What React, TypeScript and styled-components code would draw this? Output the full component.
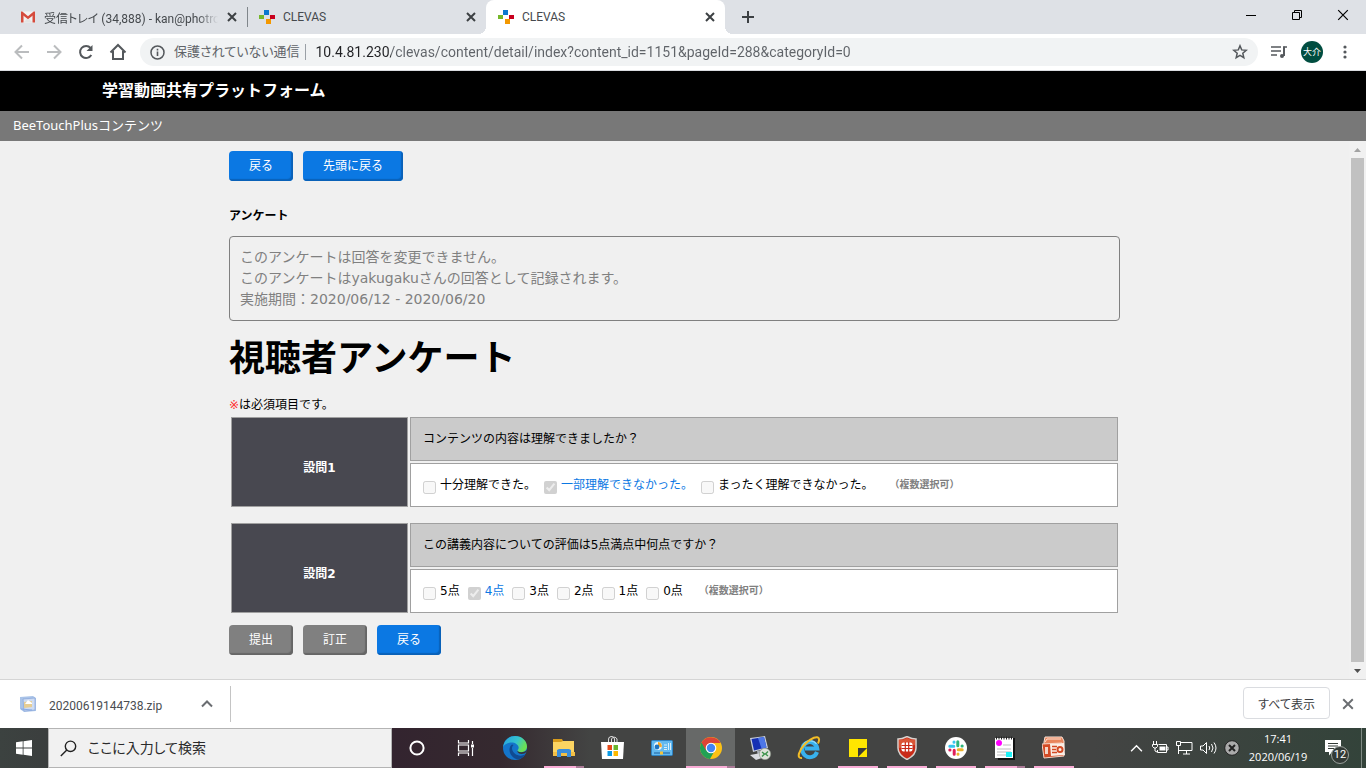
import React from "react";
import styled, { createGlobalStyle } from "styled-components";

const UI_FONT = 'Roboto, "Noto Sans CJK JP", sans-serif';
const PAGE_FONT = '"DejaVu Sans", "Noto Sans CJK JP", sans-serif';

const GlobalStyle = createGlobalStyle`
  * { box-sizing: border-box; }
  body { margin: 0; font-family: ${UI_FONT}; }
  button, input { font: inherit; }
  svg { display: block; flex: none; }
`;

/* ---------- window ---------- */

const Window = styled.div`
  display: flex;
  flex-direction: column;
  min-height: 100vh;
  background: #f0f0f0;
`;

const PlainButton = styled.button`
  display: flex;
  align-items: center;
  justify-content: center;
  flex: none;
  padding: 0;
  border: 0;
  background: transparent;
  color: inherit;
`;

/* ---------- tab strip ---------- */

const TabStrip = styled.div`
  display: flex;
  align-items: stretch;
  height: 34px;
  padding-left: 8px;
  background: #dee1e6;
`;

const Tab = styled.div<{ $active?: boolean; $divider?: boolean }>`
  position: relative;
  display: flex;
  align-items: center;
  gap: 8px;
  width: 239px;
  padding: 0 9px 0 12px;
  border-radius: 8px 8px 0 0;
  background: ${(p) => (p.$active ? "#ffffff" : "transparent")};
  color: #45494d;
  font-size: 12px;

  &::before,
  &::after {
    content: "";
    display: ${(p) => (p.$active ? "block" : "none")};
    position: absolute;
    bottom: 0;
    width: 8px;
    height: 8px;
  }
  &::before {
    right: 100%;
    background: radial-gradient(circle at 0 0, transparent 8px, #fff 8px);
  }
  &::after {
    left: 100%;
    background: radial-gradient(circle at 100% 0, transparent 8px, #fff 8px);
  }
  ${(p) =>
    p.$divider &&
    `&::after {
      display: block;
      width: 1px;
      height: 20px;
      bottom: 7px;
      background: #80868b;
    }`}
`;

const TabTitle = styled.span<{ $fade?: boolean }>`
  flex: 1;
  min-width: 0;
  white-space: nowrap;
  font-feature-settings: "palt";
  ${(p) => p.$fade && "mask-image: linear-gradient(90deg, #000 88%, transparent);"}
`;

const TabClose = styled(PlainButton)`
  width: 12px;
  height: 16px;
`;

const NewTab = styled(PlainButton)`
  width: 46px;
`;

const WindowControls = styled.div`
  display: flex;
  margin-left: auto;
`;

const WindowControl = styled(PlainButton)`
  width: 46px;
  height: 29px;
`;

/* ---------- toolbar ---------- */

const Toolbar = styled.div`
  display: flex;
  align-items: center;
  height: 37px;
  padding: 0 5px 0 6px;
  background: #fff;
  border-bottom: 1px solid #dadce0;
`;

const ToolButton = styled(PlainButton)`
  width: 32px;
  height: 32px;
`;

const Omnibox = styled.div`
  display: flex;
  align-items: center;
  flex: 1;
  min-width: 0;
  height: 28px;
  margin: 0 5px 0 6px;
  padding: 0 10px;
  border-radius: 14px;
  background: #f1f3f4;
  color: #5f6368;
  font-size: 14px;
`;

const Security = styled.span`
  flex: none;
  margin-left: 9px;
  padding-right: 6px;
  border-right: 1px solid #9aa0a6;
  font-size: 13px;
  line-height: 16px;
  font-feature-settings: "palt";
`;

const Address = styled.input`
  flex: 1;
  min-width: 0;
  padding: 0 0 0 9px;
  border: 0;
  outline: 0;
  font-size: 14px;
  line-height: 20px;
  color: transparent;
  background: linear-gradient(90deg, #202124 85px, #5f6368 85px);
  background-clip: text;
`;

const Avatar = styled.button`
  width: 22px;
  height: 22px;
  margin: 0 6px;
  padding: 0;
  border: 0;
  border-radius: 50%;
  background: #004d40;
  color: #fff;
  font-size: 9px;
  line-height: 22px;
`;

/* ---------- page ---------- */

const SiteHeader = styled.header`
  height: 40px;
  padding-left: 102px;
  background: #000;
  color: #fff;
  font: bold 16px/40px ${PAGE_FONT};
`;

const SiteSubheader = styled.div`
  height: 30px;
  padding-left: 13px;
  background: #787878;
  color: #fff;
  font: 13px/28px "Noto Sans", "Noto Sans CJK JP", sans-serif;
`;

const Viewport = styled.div`
  display: flex;
  flex: 1;
`;

const Main = styled.main`
  flex: 1;
  min-width: 0;
  padding: 10px 16px;
  font: 12px/20px ${PAGE_FONT};
  color: #000;
`;

const Survey = styled.div`
  max-width: 891px;
  margin: 0 auto;
`;

const ButtonRow = styled.div`
  display: flex;
  gap: 10px;
`;

const ActionButton = styled.button<{ $muted?: boolean }>`
  height: 30px;
  padding: 0 20px;
  border: 0;
  border-radius: 4px;
  background: ${(p) => (p.$muted ? "#808080" : "#0b78e3")};
  box-shadow: inset -2px -2px 1px ${(p) => (p.$muted ? "#666666" : "#0961b8")};
  color: #fff;
  font-size: 12px;
  line-height: 30px;
`;

const SectionTitle = styled.h2`
  margin: 25px 0 10px;
  font-size: 12px;
  line-height: 20px;
`;

const Notice = styled.p`
  margin: 0;
  padding: 10px;
  border: 1px solid #808080;
  border-radius: 4px;
  color: #808080;
  font-size: 14px;
  line-height: 21px;
`;

const SurveyTitle = styled.h1`
  margin: 2px 0 0;
  font-size: 36px;
  line-height: 72px;
`;

const RequiredNote = styled.p`
  margin: 0;
  line-height: 20px;
`;

const RequiredMark = styled.span`
  color: #ff3030;
`;

const QuestionTable = styled.table`
  width: 100%;
  margin-bottom: 10px;
  border-spacing: 2px;

  & + & {
    margin-top: 12px;
  }
`;

const QuestionNumber = styled.th`
  width: 20%;
  padding: 12px 0 0;
  border: 1px solid #a0a0a0;
  background: #484850;
  color: #fff;
`;

const QuestionCell = styled.td<{ $head?: boolean }>`
  height: 44px;
  padding: 0 12px;
  border: 1px solid #a0a0a0;
  background: ${(p) => (p.$head ? "#cbcbcb" : "#fff")};
`;

const Options = styled.div`
  display: flex;
  align-items: center;
  gap: 8px;
`;

const Option = styled.label<{ $chosen?: boolean }>`
  display: flex;
  align-items: center;
  gap: 4px;
  color: ${(p) => (p.$chosen ? "#0b78e3" : "#000")};
`;

const CheckBox = styled.input`
  width: 13px;
  height: 13px;
  margin: 5px 0 0;
`;

const MultipleHint = styled.span`
  margin-left: 8px;
  color: #808080;
  font-size: 10px;
  font-weight: bold;
`;

const Scrollbar = styled.div`
  display: flex;
  flex-direction: column;
  width: 17px;
  background: #f1f1f1;
`;

const ScrollArrow = styled(PlainButton)`
  width: 17px;
  height: 17px;
`;

const ScrollThumb = styled.div`
  flex: 1;
  margin: 0 2px 0 2px;
  background: #c1c1c1;
`;

/* ---------- download shelf ---------- */

const DownloadShelf = styled.div`
  display: flex;
  align-items: center;
  height: 49px;
  padding: 0 12px 0 20px;
  border-top: 1px solid #d5d5d5;
  background: #fff;
  color: #4a4d51;
  font-size: 12px;
`;

const DownloadItem = styled.div`
  display: flex;
  align-items: center;
  width: 211px;
  height: 36px;
  border-right: 1px solid #c4c4c4;
`;

const DownloadName = styled.a`
  flex: 1;
  margin-left: 13px;
  padding-top: 4px;
  color: inherit;
  text-decoration: none;
`;

const DownloadMenu = styled(PlainButton)`
  width: 46px;
  height: 32px;
`;

const ShowAll = styled.button`
  height: 32px;
  margin: 0 12px 2px auto;
  padding: 0 14px;
  border: 1px solid #dadce0;
  border-radius: 4px;
  background: #fff;
  color: #3c4043;
  font-feature-settings: "palt";
`;

/* ---------- taskbar ---------- */

const Taskbar = styled.footer`
  display: flex;
  align-items: stretch;
  height: 40px;
  background: linear-gradient(90deg, #3c4240 0, #33242f 392px, #35292f 500px, #434443 590px, #434443 80%, #33433a 100%);
  color: #fff;
`;

const StartButton = styled(PlainButton)`
  width: 48px;
`;

const SearchBox = styled.label`
  display: flex;
  align-items: center;
  gap: 11px;
  width: 344px;
  padding-left: 11px;
  border: 1px solid #b4b4b4;
  background: #f1f1f1;
`;

const SearchInput = styled.input`
  flex: 1;
  min-width: 0;
  padding: 0;
  border: 0;
  outline: 0;
  background: transparent;
  font-size: 14px;
  font-feature-settings: "palt";
  &::placeholder {
    color: #2b2b2b;
  }
`;

const TaskButton = styled(PlainButton)<{ $open?: boolean; $stacked?: boolean; $active?: boolean }>`
  position: relative;
  width: 49px;
  background: ${(p) => (p.$active ? "#676968" : "transparent")};
  &::after {
    content: "";
    display: ${(p) => (p.$open ? "block" : "none")};
    position: absolute;
    left: ${(p) => (p.$active ? "0" : "5px")};
    right: ${(p) => (p.$active ? "0" : "4px")};
    bottom: 0;
    height: 2px;
    background: ${(p) =>
      p.$stacked
        ? "linear-gradient(90deg, #f9acd6 calc(100% - 8px), #a97a96 calc(100% - 8px))"
        : "#f9acd6"};
  }
`;

const Tray = styled.div`
  display: flex;
  align-items: center;
  margin-left: auto;
`;

const TrayButton = styled(PlainButton)`
  width: 24px;
  height: 40px;
`;

const Clock = styled.time`
  width: 68px;
  font-family: "Open Sans", sans-serif;
  font-size: 11px;
  line-height: 18px;
  text-align: center;
`;

const ActionCenter = styled(PlainButton)`
  position: relative;
  justify-content: flex-start;
  width: 49px;
  height: 40px;
  padding-left: 13px;
`;

const ActionBadge = styled.span`
  position: absolute;
  left: 19px;
  top: 18px;
  width: 18px;
  height: 18px;
  border: 1px solid #9aa09c;
  border-radius: 50%;
  background: #333a36;
  font-size: 11px;
  line-height: 16px;
`;

const ShowDesktop = styled(PlainButton)`
  width: 5px;
  height: 40px;
  border-left: 1px solid #7f8a84;
`;

/* ---------- icons ---------- */

const CrossIcon = ({ size = 10, color = "#3c4043", width = 2 }) => (
  <svg width={size} height={size} viewBox="0 0 10 10" stroke={color} strokeWidth={width}>
    <path d="M1 1l8 8M9 1l-8 8" />
  </svg>
);

const GmailIcon = () => (
  <svg width="16" height="16" viewBox="0 0 16 16">
    <path d="M1 2.500h14v11H1z" fill="#f2f2f2" />
    <path d="M1 13.500V3.200L3.500 5v8.500zM15 13.500V3.200L12.500 5v8.500z" fill="#d54b3d" />
    <path d="M1 2.600h1.300L8 7.200l5.700-4.600H15v2.200L8 10.200 1 4.800z" fill="#d54b3d" />
    <path d="M3.500 13.500L7 9.800l1 .8 1-.8 3.500 3.700z" fill="#e3e3e3" />
  </svg>
);

const ClevasIcon = () => (
  <svg width="16" height="16" viewBox="0 0 16 16">
    <path d="M5 1h5v5H5z" fill="#0b79d0" />
    <path d="M0 6h5v4H0z" fill="#76b82a" />
    <path d="M11 6h5v4h-5z" fill="#c8001e" />
    <path d="M7 10h5v5H7z" fill="#f39800" />
  </svg>
);

const ArrowIcon = ({ flip = false }) => (
  <svg width="16" height="16" viewBox="0 0 16 16" fill="none" stroke="#babcbe" strokeWidth="2">
    <path d={flip ? "M1 8h13M8 1.500L14.500 8 8 14.500" : "M15 8H2M8 1.500L1.500 8 8 14.500"} />
  </svg>
);

const ReloadIcon = () => (
  <svg width="16" height="16" viewBox="0 0 16 16" fill="none" stroke="#54585c" strokeWidth="2">
    <path d="M13.300 11A6 6 0 1 1 12.600 4" />
    <path d="M14.500 1v6h-6z" fill="#54585c" stroke="none" />
  </svg>
);

const HomeIcon = () => (
  <svg width="18" height="18" viewBox="0 0 18 18" fill="none" stroke="#54585c" strokeWidth="2">
    <path d="M1.500 9.500L9 2l7.500 7.500M4 8v8h10V8" />
  </svg>
);

const InfoIcon = () => (
  <svg width="15" height="15" viewBox="0 0 15 15" fill="none" stroke="#54585c">
    <circle cx="7.500" cy="7.500" r="6.500" strokeWidth="1.500" />
    <path d="M7.500 6.500V11M7.500 3.800v1.600" strokeWidth="1.600" />
  </svg>
);

const StarIcon = () => (
  <svg width="16" height="16" viewBox="0 0 16 16" fill="none" stroke="#54585c" strokeWidth="1.500">
    <path d="M8 1.800l1.700 4.100 4.500.4-3.400 2.900 1 4.400L8 11.300l-3.800 2.300 1-4.400-3.400-2.900 4.500-.4z" />
  </svg>
);

const QueueIcon = () => (
  <svg width="18" height="16" viewBox="0 0 18 16" fill="none" stroke="#54585c" strokeWidth="1.700">
    <path d="M1 3h10M1 7h10M1 11h6M14 12V3h3" />
    <circle cx="12" cy="12" r="2" fill="#54585c" stroke="none" />
    <path d="M14 12V2.500" />
  </svg>
);

const DotsIcon = () => (
  <svg width="4" height="14" viewBox="0 0 4 14" fill="#54585c">
    <circle cx="2" cy="2" r="1.600" />
    <circle cx="2" cy="7" r="1.600" />
    <circle cx="2" cy="12" r="1.600" />
  </svg>
);

const Triangle = ({ down = false, color = "#505050" }) => (
  <svg width="7" height="4" viewBox="0 0 7 4" fill={color}>
    <path d={down ? "M0 0h7L3.500 4z" : "M0 4h7L3.500 0z"} />
  </svg>
);

const ChevronUp = ({ size = 11, color = "#fff", width = 1.5 }) => (
  <svg width={size} height={size} viewBox="0 0 12 12" fill="none" stroke={color} strokeWidth={width}>
    <path d="M1 8.500l5-5 5 5" />
  </svg>
);

const ZipIcon = () => (
  <svg width="16" height="16" viewBox="0 0 16 16">
    <path d="M0 1l13-1 3 2v13l-12 1-4-3z" fill="#a9c3e8" />
    <path d="M3 3l12-1v12L4 15z" fill="#cfdcf2" stroke="#86a5da" strokeWidth=".7" />
    <path d="M4 6l8-1v6l-8 1z" fill="#e6cd94" />
    <path d="M5 8l3-4 4 3v1z" fill="#fff" />
    <path d="M1 13l11 1" stroke="#87aae4" />
  </svg>
);

const WindowsIcon = () => (
  <svg width="16" height="16" viewBox="0 0 16 16" fill="#fff">
    <path d="M0 2.200l6.700-.9v6.300H0zM7.500 1.200L16 0v7.600H7.500zM0 8.400h6.700v6.300L0 13.800zM7.500 8.400H16V16l-8.500-1.200z" />
  </svg>
);

const SearchIcon = () => (
  <svg width="17" height="17" viewBox="0 0 17 17" fill="none" stroke="#222" strokeWidth="1.400">
    <circle cx="10.500" cy="6.300" r="5.200" />
    <path d="M6.800 10L.8 16" />
  </svg>
);

const CortanaIcon = () => (
  <svg width="16" height="16" viewBox="0 0 16 16" fill="none" stroke="#fff" strokeWidth="2">
    <circle cx="8" cy="8" r="6.600" />
  </svg>
);

const TaskViewIcon = () => (
  <svg width="18" height="16" viewBox="0 0 18 16" fill="none" stroke="#fff" strokeWidth="1.200">
    <path d="M1.500 0v3h10V0M1.500 16v-3h10v3M1.500 5h10v6h-10zM15.500 1v3M15.500 8v8" />
    <path d="M14 4.500h3v3h-3z" fill="#fff" stroke="none" />
  </svg>
);

const EdgeIcon = () => (
  <svg width="24" height="24" viewBox="0 0 24 24">
    <defs>
      <linearGradient id="edgeTop" x1="0" y1="0" x2="1" y2="0.400">
        <stop offset="0" stopColor="#259fe0" />
        <stop offset=".6" stopColor="#35c4cf" />
        <stop offset="1" stopColor="#6adf55" />
      </linearGradient>
    </defs>
    <circle cx="12" cy="12" r="12" fill="#1475ca" />
    <path d="M0 11C1 4.500 6 0 12 0c7 0 12 5 12 10.500 0 3.500-2.500 5.700-6 5.700-2.500 0-4-1-3.500-2 .8-.9 1.200-1.600 1.200-2.500C15.500 8 11 6 7.500 6.500 4 7 1 9 0 11z" fill="url(#edgeTop)" />
    <path d="M9 8.500C5.500 11 6 16 8.500 19.500c1.600 2.200 4 3.700 6.500 4.100 3-.6 5.700-2.500 7.300-5C16 21.500 9.500 18 9 12.500c0-1.500.5-2.500 1.500-3.500z" fill="#104a91" />
    <path d="M14.500 14.300C14 15.500 15 18 18.500 18c2.200 0 3.700-.8 5-2.200.3-.8.400-1.300.4-2-1.500 2-3.700 2.500-5.900 2.400-2.500 0-3.700-1-3.500-1.900z" fill="#363236" />
  </svg>
);

const ExplorerIcon = () => (
  <svg width="22" height="18" viewBox="0 0 22 18">
    <path d="M0 0h9l1 2h11v5H0z" fill="#d99c1c" />
    <path d="M0 3h8l2-1h11v15H0z" fill="#fcd462" />
    <path d="M0 13h22v4H0z" fill="#f3bf45" />
    <path d="M4 18v-7l2-1h10l2 1v7h-4v-4H8v4z" fill="#3a8ddb" />
  </svg>
);

const StoreIcon = () => (
  <svg width="24" height="24" viewBox="0 0 24 24">
    <path d="M7.500 7V4a3 3 0 0 1 6-1v4M10.500 6V3a3 3 0 0 1 5.500 0v4" fill="none" stroke="#ddd" />
    <path d="M0 6h23l-1 17H1z" fill="#fff" />
    <path d="M6.500 9H11v5H6.500z" fill="#e64a19" />
    <path d="M12.500 9H17v5h-4.500z" fill="#6ab52d" />
    <path d="M6.500 15H11v5H6.500z" fill="#0a9be6" />
    <path d="M12.500 15H17v5h-4.500z" fill="#fdb900" />
  </svg>
);

const CardIcon = () => (
  <svg width="22" height="16" viewBox="0 0 22 16">
    <rect x=".5" y=".5" width="21" height="15" rx="1" fill="#63b9ef" stroke="#2d83c5" />
    <circle cx="7" cy="6" r="4" fill="#e8f5fd" />
    <path d="M7 6V2a4 4 0 0 1 3.500 5.500z" fill="#f5a623" />
    <circle cx="6" cy="7" r="2.400" fill="#1e73c0" />
    <path d="M13 5h3M13 7.500h3M17.500 3v7M19.500 3v7M13 9.500h3" stroke="#d8eefb" />
    <path d="M3 13h16" stroke="#1e5f99" />
    <path d="M9 11.500h3v3H9z" fill="#f2c23a" />
  </svg>
);

const ChromeIcon = () => (
  <svg width="22" height="22" viewBox="0 0 22 22">
    <circle cx="11" cy="11" r="11" fill="#fbc116" />
    <path d="M11 11L1.500 5.500A11 11 0 0 0 10 22l5-9z" fill="#21a155" />
    <path d="M1.500 5.500A11 11 0 0 1 20.600 6H11l-5 7.500z" fill="#dc4437" />
    <circle cx="11" cy="11" r="5.300" fill="#fff" />
    <circle cx="11" cy="11" r="4.200" fill="#4285f4" />
  </svg>
);

const RemoteIcon = () => (
  <svg width="24" height="24" viewBox="0 0 24 24">
    <path d="M2 2l15-2 3 12L5 16z" fill="#c8cfdb" />
    <path d="M3.500 3L16 1l2.500 10.500L6 14.500z" fill="#1530b4" />
    <path d="M10 2l6-1 2.500 10.500-5 1z" fill="#4d77e8" />
    <path d="M9 15l6-1 1 4-6 2z" fill="#aab0ba" />
    <path d="M2 19l11-2 4 4-9 3z" fill="#d9dce2" />
    <circle cx="17" cy="18" r="5.700" fill="#dfe3da" stroke="#868e83" strokeWidth=".6" />
    <path d="M14 16l2.500 2-2.500 2.500M20 15.500L17.500 18l2.500 2" stroke="#3e944b" strokeWidth="1.400" fill="none" />
  </svg>
);

const IeIcon = () => (
  <svg width="24" height="24" viewBox="0 0 24 24" fill="none">
    <path d="M20 16a7.500 7.500 0 1 1 .3-3.500H8" stroke="#38b2ee" strokeWidth="4" />
    <path d="M19.500 8a8 8 0 0 0-14 3" stroke="#8bdbfb" strokeWidth="1.200" />
    <path d="M5 22C-1 23 2 14 8 8S21-1 22 3c.3 1.500-.3 3-1 4.500" stroke="#f3bd26" strokeWidth="2" />
  </svg>
);

const StickyIcon = () => (
  <svg width="18" height="18" viewBox="0 0 18 18">
    <path d="M0 0h18v9l-9 9H0z" fill="#ffe600" />
    <path d="M9 18h9V9z" fill="#ffe600" />
    <path d="M9 9h9l-9 9z" fill="#3a3a3a" />
  </svg>
);

const ShieldIcon = () => (
  <svg width="20" height="24" viewBox="0 0 20 24">
    <path d="M1 3c4 0 6-1 9-2.500C13 2 15 3 19 3v9c0 5-4 9-9 11.500C5 21 1 17 1 12z" fill="#c92b18" stroke="#d7d3cf" strokeWidth="1.500" />
    <path d="M2 4c4 0 6-1 8-2 2 1 4 2 8 2v5L2 12z" fill="#e36b45" opacity=".7" />
    <rect x="4.500" y="6.500" width="11" height="9" rx="2" fill="#fff" />
    <path d="M4.500 9.500h11M4.500 12.500h11M8.300 6v10M11.700 6v10" stroke="#c92b18" strokeWidth="1.200" />
  </svg>
);

const SlackIcon = () => (
  <svg width="22" height="22" viewBox="0 0 22 22" fill="none" strokeLinecap="round" strokeWidth="3">
    <circle cx="11" cy="11" r="11" fill="#fff" />
    <path d="M4.800 9.200h4M9 5v.2" stroke="#36c5f0" />
    <path d="M12.800 4.800v4M17 9h.2" stroke="#2eb67d" />
    <path d="M13.200 12.800h4M13 17v.2" stroke="#ecb22e" />
    <path d="M9.200 13.200v4M4.800 13h.2" stroke="#e01e5a" />
  </svg>
);

const NotepadIcon = () => (
  <svg width="20" height="24" viewBox="0 0 20 24">
    <path d="M1 2h19v22H3z" fill="#111" />
    <path d="M0 2h18v20H0z" fill="#fff" />
    <path d="M1 2h17" stroke="#222" strokeWidth="3" strokeDasharray="1 1.500" />
    <circle cx="4" cy="7" r="3" fill="#f0f" />
    <path d="M8 9h8M2 13h14M2 16h14M2 19h9" stroke="#bbb" />
    <path d="M11 16h6v5h-6z" fill="#1ef0f5" />
  </svg>
);

const PowerPointIcon = () => (
  <svg width="24" height="24" viewBox="0 0 24 24">
    <path d="M3 1h17l2 4v10H2V6z" fill="#e9855c" stroke="#fbe3d6" />
    <path d="M5 3h14M3 6l2-3" stroke="#fbe3d6" />
    <path d="M0 8l20-1 2 13-20 2z" fill="#d34a24" stroke="#f6d5c6" />
    <path d="M8 8l14-1 1 12-14 1z" fill="#fbeee6" />
    <path d="M10 10.500h5M10 13.500h4M10 16.500h5" stroke="#d34a24" strokeWidth="1.600" />
    <circle cx="18" cy="13.500" r="2.500" fill="none" stroke="#d34a24" strokeWidth="2" />
    <path d="M3 11h3v7H3z" fill="#f6d5c6" />
  </svg>
);

const BatteryIcon = () => (
  <svg width="17" height="14" viewBox="0 0 17 14" fill="none" stroke="#fff">
    <path d="M6.500 3.500h8v8h-9V9M14.500 6h1.500v3h-1.500" />
    <path d="M7.500 5.500h6v4h-6z" fill="#fff" stroke="none" />
    <path d="M1.500 0v3M4.500 0v3M.5 3.500h5v2l-1.500 1.500H2L.5 5.500zM3 7v3l2 1" />
  </svg>
);

const NetworkIcon = () => (
  <svg width="17" height="14" viewBox="0 0 17 14" fill="none" stroke="#fff">
    <path d="M5 1.500h11v8H5M10.500 9.500V13M7 13h7M.5.500h4v4h-4zM2.500 4.500V13M2.500 9.500H5" />
  </svg>
);

const VolumeIcon = () => (
  <svg width="17" height="14" viewBox="0 0 17 14" fill="none" stroke="#fff">
    <path d="M.5 5h2.500l3.500-3.500v11L3 9H.5zM9 5q1.500 2 0 4M11.500 3q3 4 0 8M14 1.500q4 5.500 0 11" />
  </svg>
);

const BlockedIcon = () => (
  <svg width="16" height="16" viewBox="0 0 16 16" stroke="#222">
    <circle cx="8" cy="8" r="7.300" fill="#aaa" />
    <path d="M5 5l6 6M11 5l-6 6" strokeWidth="2" />
  </svg>
);

const MessageIcon = () => (
  <svg width="16" height="16" viewBox="0 0 16 16">
    <path d="M0 0h16v12H7l-3 3.500V12H0z" fill="#fff" />
    <path d="M3 3.500h10M3 6h10M3 8.500h6" stroke="#333a36" />
  </svg>
);

/* ---------- data ---------- */

type Choice = { text: string; chosen?: boolean };
type Question = { label: string; text: string; choices: Choice[] };

const questions: Question[] = [
  {
    label: "設問1",
    text: "コンテンツの内容は理解できましたか？",
    choices: [
      { text: "十分理解できた。" },
      { text: "一部理解できなかった。", chosen: true },
      { text: "まったく理解できなかった。" },
    ],
  },
  {
    label: "設問2",
    text: "この講義内容についての評価は5点満点中何点ですか？",
    choices: [
      { text: "5点" },
      { text: "4点", chosen: true },
      { text: "3点" },
      { text: "2点" },
      { text: "1点" },
      { text: "0点" },
    ],
  },
];

type Task = { name: string; icon: React.ReactNode; open?: boolean; stacked?: boolean; active?: boolean };

const tasks: Task[] = [
  { name: "Cortana", icon: <CortanaIcon /> },
  { name: "タスク ビュー", icon: <TaskViewIcon /> },
  { name: "Edge", icon: <EdgeIcon /> },
  { name: "エクスプローラー", icon: <ExplorerIcon />, open: true, stacked: true },
  { name: "Store", icon: <StoreIcon /> },
  { name: "コントロール パネル", icon: <CardIcon /> },
  { name: "Chrome", icon: <ChromeIcon />, open: true, stacked: true, active: true },
  { name: "リモート デスクトップ", icon: <RemoteIcon /> },
  { name: "Internet Explorer", icon: <IeIcon /> },
  { name: "付箋", icon: <StickyIcon />, open: true },
  { name: "FortiClient", icon: <ShieldIcon />, open: true },
  { name: "Slack", icon: <SlackIcon />, open: true },
  { name: "メモ", icon: <NotepadIcon />, open: true, stacked: true },
  { name: "PowerPoint", icon: <PowerPointIcon />, open: true },
];

const QuestionBlock = ({ question }: { question: Question }) => (
  <QuestionTable>
    <tbody>
      <tr>
        <QuestionNumber rowSpan={2} scope="rowgroup">
          {question.label}
        </QuestionNumber>
        <QuestionCell $head>{question.text}</QuestionCell>
      </tr>
      <tr>
        <QuestionCell>
          <Options>
            {question.choices.map((choice) => (
              <Option key={choice.text} $chosen={choice.chosen}>
                <CheckBox type="checkbox" disabled defaultChecked={choice.chosen} />
                {choice.text}
              </Option>
            ))}
            <MultipleHint>（複数選択可）</MultipleHint>
          </Options>
        </QuestionCell>
      </tr>
    </tbody>
  </QuestionTable>
);

export default function App() {
  return (
    <Window>
      <GlobalStyle />
      <TabStrip>
        <Tab $divider>
          <GmailIcon />
          <TabTitle $fade>受信トレイ (34,888) - kan@photro</TabTitle>
          <TabClose aria-label="閉じる"><CrossIcon /></TabClose>
        </Tab>
        <Tab>
          <ClevasIcon />
          <TabTitle>CLEVAS</TabTitle>
          <TabClose aria-label="閉じる"><CrossIcon /></TabClose>
        </Tab>
        <Tab $active>
          <ClevasIcon />
          <TabTitle>CLEVAS</TabTitle>
          <TabClose aria-label="閉じる"><CrossIcon /></TabClose>
        </Tab>
        <NewTab aria-label="新しいタブ">
          <svg width="12" height="12" viewBox="0 0 12 12" stroke="#3c4043" strokeWidth="2">
            <path d="M6 0v12M0 6h12" />
          </svg>
        </NewTab>
        <WindowControls>
          <WindowControl aria-label="最小化">
            <svg width="10" height="10" viewBox="0 0 10 10"><path d="M0 5h10v1H0z" /></svg>
          </WindowControl>
          <WindowControl aria-label="元に戻す">
            <svg width="10" height="10" viewBox="0 0 10 10" fill="none" stroke="#000">
              <path d="M.5 2.500h7v7h-7zM2.500 2.500v-2h7v7h-2" />
            </svg>
          </WindowControl>
          <WindowControl aria-label="ウィンドウを閉じる">
            <CrossIcon size={12} color="#000" width={1} />
          </WindowControl>
        </WindowControls>
      </TabStrip>

      <Toolbar>
        <ToolButton aria-label="戻る"><ArrowIcon /></ToolButton>
        <ToolButton aria-label="進む"><ArrowIcon flip /></ToolButton>
        <ToolButton aria-label="再読み込み"><ReloadIcon /></ToolButton>
        <ToolButton aria-label="ホーム"><HomeIcon /></ToolButton>
        <Omnibox>
          <InfoIcon />
          <Security>保護されていない通信</Security>
          <Address
            aria-label="アドレス"
            defaultValue="10.4.81.230/clevas/content/detail/index?content_id=1151&pageId=288&categoryId=0"
          />
          <PlainButton aria-label="ブックマーク"><StarIcon /></PlainButton>
        </Omnibox>
        <ToolButton aria-label="再生リスト"><QueueIcon /></ToolButton>
        <Avatar>大介</Avatar>
        <ToolButton aria-label="メニュー"><DotsIcon /></ToolButton>
      </Toolbar>

      <SiteHeader>学習動画共有プラットフォーム</SiteHeader>
      <SiteSubheader>BeeTouchPlusコンテンツ</SiteSubheader>

      <Viewport>
        <Main>
          <Survey>
            <ButtonRow>
              <ActionButton>戻る</ActionButton>
              <ActionButton>先頭に戻る</ActionButton>
            </ButtonRow>
            <SectionTitle>アンケート</SectionTitle>
            <Notice>
              このアンケートは回答を変更できません。
              <br />
              このアンケートはyakugakuさんの回答として記録されます。
              <br />
              実施期間：2020/06/12 - 2020/06/20
            </Notice>
            <SurveyTitle>視聴者アンケート</SurveyTitle>
            <RequiredNote>
              <RequiredMark>※</RequiredMark>は必須項目です。
            </RequiredNote>
            {questions.map((question) => (
              <QuestionBlock key={question.label} question={question} />
            ))}
            <ButtonRow>
              <ActionButton $muted>提出</ActionButton>
              <ActionButton $muted>訂正</ActionButton>
              <ActionButton>戻る</ActionButton>
            </ButtonRow>
          </Survey>
        </Main>
        <Scrollbar>
          <ScrollArrow aria-label="上へスクロール"><Triangle color="#a3a3a3" /></ScrollArrow>
          <ScrollThumb />
          <ScrollArrow aria-label="下へスクロール"><Triangle down /></ScrollArrow>
        </Scrollbar>
      </Viewport>

      <DownloadShelf>
        <DownloadItem>
          <ZipIcon />
          <DownloadName href="#">20200619144738.zip</DownloadName>
          <DownloadMenu aria-label="その他の操作">
            <ChevronUp size={12} color="#6a6d71" width={2} />
          </DownloadMenu>
        </DownloadItem>
        <ShowAll>すべて表示</ShowAll>
        <PlainButton aria-label="ダウンロード バーを閉じる">
          <CrossIcon size={12} color="#6a6d71" width={1.6} />
        </PlainButton>
      </DownloadShelf>

      <Taskbar>
        <StartButton aria-label="スタート"><WindowsIcon /></StartButton>
        <SearchBox>
          <SearchIcon />
          <SearchInput placeholder="ここに入力して検索" aria-label="検索" />
        </SearchBox>
        {tasks.map((task) => (
          <TaskButton
            key={task.name}
            aria-label={task.name}
            $open={task.open}
            $stacked={task.stacked}
            $active={task.active}
          >
            {task.icon}
          </TaskButton>
        ))}
        <Tray>
          <TrayButton aria-label="隠れているインジケーター"><ChevronUp size={13} width={1.3} /></TrayButton>
          <TrayButton aria-label="電源"><BatteryIcon /></TrayButton>
          <TrayButton aria-label="ネットワーク"><NetworkIcon /></TrayButton>
          <TrayButton aria-label="音量"><VolumeIcon /></TrayButton>
          <TrayButton aria-label="停止中"><BlockedIcon /></TrayButton>
          <Clock>
            17:41
            <br />
            2020/06/19
          </Clock>
          <ActionCenter aria-label="通知 12 件">
            <MessageIcon />
            <ActionBadge>12</ActionBadge>
          </ActionCenter>
          <ShowDesktop aria-label="デスクトップの表示" />
        </Tray>
      </Taskbar>
    </Window>
  );
}
